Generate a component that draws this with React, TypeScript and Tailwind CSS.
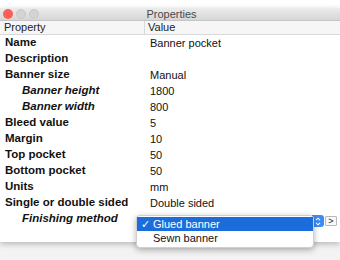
import React from 'react';

type Row = { label: string; value: string; sub?: boolean };

const rows: Row[] = [
  { label: 'Name', value: 'Banner pocket' },
  { label: 'Description', value: '' },
  { label: 'Banner size', value: 'Manual' },
  { label: 'Banner height', value: '1800', sub: true },
  { label: 'Banner width', value: '800', sub: true },
  { label: 'Bleed value', value: '5' },
  { label: 'Margin', value: '10' },
  { label: 'Top pocket', value: '50' },
  { label: 'Bottom pocket', value: '50' },
  { label: 'Units', value: 'mm' },
  { label: 'Single or double sided', value: 'Double sided' },
  { label: 'Finishing method', value: '', sub: true },
];

export default function App() {
  return (
    <div className="relative w-[340px] h-[260px] overflow-hidden bg-[#f3f3f3] font-['Liberation_Sans',Arial,sans-serif] text-[#111]">
      <div className="h-[8px] bg-white" />
      <div className="flex flex-col bg-white shadow-[0_2px_6px_rgba(0,0,0,0.25)]">
        {/* title bar */}
        <div className="relative flex items-center h-[13px] bg-gradient-to-b from-[#ececec] to-[#d6d6d6] border-b border-[#c4c4c4]">
          <div className="flex items-center gap-[3px] pl-[3px]">
            <span className="w-[10px] h-[10px] rounded-full bg-[#fc5f57]" />
            <span className="w-[10px] h-[10px] rounded-full bg-[#d4d4d4] border border-[#c8c8c8]" />
            <span className="w-[10px] h-[10px] rounded-full bg-[#d4d4d4] border border-[#c8c8c8]" />
          </div>
          <div className="flex-1 text-center text-[11px] leading-none text-[#4a4a4a] pr-[36px]">Properties</div>
        </div>
        {/* header */}
        <div className="flex h-[14px] items-center bg-[#f6f6f6] border-b border-[#d9d9d9] text-[11px] leading-none text-[#222]">
          <div className="w-[145px] pl-[4px] border-r border-[#d9d9d9] h-full flex items-center">Property</div>
          <div className="pl-[3px]">Value</div>
        </div>
        {/* rows */}
        <div className="flex flex-col pb-[15px]">
          {rows.map((r) => (
            <div key={r.label} className="flex h-[16px] items-center leading-none">
              <div className={`w-[150px] font-bold text-[11.5px] ${r.sub ? 'pl-[22px] italic' : 'pl-[5px]'}`}>{r.label}</div>
              <div className="text-[11px]">{r.value}</div>
            </div>
          ))}
        </div>
      </div>

      {/* select stepper + button */}
      <div className="absolute left-[312px] top-[215px] w-[12px] h-[12px] rounded-r-[3px] bg-[#3d8cf5] flex items-center justify-center">
        <svg width="6" height="9" viewBox="0 0 6 9" fill="none" stroke="white" strokeWidth="1.1">
          <path d="M1 3.2 L3 1.2 L5 3.2" />
          <path d="M1 5.8 L3 7.8 L5 5.8" />
        </svg>
      </div>
      <div className="absolute left-[325px] top-[216px] w-[12px] h-[10px] bg-[#f8f8f8] border border-[#b9b9b9] rounded-[1px] flex items-center justify-center text-[9px] leading-none text-[#222]">
        &gt;
      </div>

      {/* popup menu */}
      <div className="absolute left-[136px] top-[215px] w-[178px] h-[33px] bg-white border border-[#cfcfcf] rounded-[4px] shadow-[0_2px_6px_rgba(0,0,0,0.3)] py-[1px] text-[11px] leading-none">
        <div className="flex items-center h-[14px] bg-[#1c6ddb] text-white">
          <span className="w-[16px] pl-[4px] text-[11px]">✓</span>
          <span>Glued banner</span>
        </div>
        <div className="flex items-center h-[15px] text-[#111]">
          <span className="w-[16px]" />
          <span>Sewn banner</span>
        </div>
      </div>
    </div>
  );
}
